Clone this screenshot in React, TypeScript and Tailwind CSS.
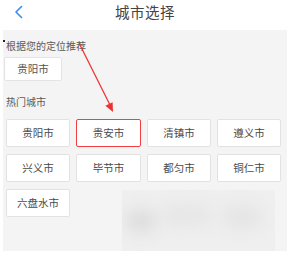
import React from "react";

const hot = ["贵阳市", "贵安市", "清镇市", "遵义市", "兴义市", "毕节市", "都匀市", "铜仁市", "六盘水市"];

export default function App() {
  return (
    <div
      className="relative w-[287px] h-[253px] bg-white overflow-hidden"
      style={{ fontFamily: '"Noto Sans CJK SC", "Noto Sans", sans-serif' }}
    >
      <div className="relative h-[30px] flex items-center justify-center">
        <svg className="absolute left-[13px] top-[5px]" width="12" height="14" viewBox="0 0 12 14">
          <path d="M8.5 1.5 L3 7 L8.5 12.5" fill="none" stroke="#3b8cf0" strokeWidth="1.6" strokeLinecap="round" strokeLinejoin="round" />
        </svg>
        <span className="text-[14.5px] leading-none text-[#444] -mt-[6px] ml-[3px] tracking-[0.5px]">城市选择</span>
      </div>
      <div className="ml-[3px] h-[221px] bg-[#f4f4f4] pt-[9px]">
        <div className="relative pl-[3px] text-[10px] leading-[13px] text-[#5a5a5a]">
          <span className="absolute left-[0px] top-[1px] w-[2px] h-[2px] bg-[#222]" />
          根据您的定位推荐
        </div>
        <div className="mt-[5px] pl-[1px]">
          <div className="w-[58px] h-[24px] bg-white border border-[#e4e4e4] rounded-[2px] flex items-center justify-center text-[10.5px] text-[#555]">
            贵阳市
          </div>
        </div>
        <div className="mt-[15px] pl-[3px] text-[10px] leading-[12px] text-[#5a5a5a]">热门城市</div>
        <div className="mt-[11px] pl-[3px] grid grid-cols-[64px_65px_64px_64px] gap-x-[6px] gap-y-[7px]">
          {hot.map((c, i) => (
            <div
              key={c}
              className={
                "h-[28px] bg-white rounded-[2px] flex items-center justify-center text-[10.5px] text-[#4a4a4a] " +
                (i === 1 ? "border border-[#f04040]" : "border border-[#e2e2e2]")
              }
            >
              {c}
            </div>
          ))}
        </div>
      </div>
      <div className="absolute left-[122px] top-[190px] w-[153px] h-[61px] bg-[#efefef] overflow-hidden">
        <div className="absolute inset-0 blur-[8px]">
          <div className="absolute left-[4px] top-[20px] w-[30px] h-[22px] rounded-full bg-[#dcdcdc]" />
          <div className="absolute left-[40px] top-[14px] w-[50px] h-[22px] rounded-full bg-[#e6e6e6]" />
          <div className="absolute left-[100px] top-[16px] w-[40px] h-[22px] rounded-full bg-[#e4e4e4]" />
        </div>
      </div>
      <svg className="absolute left-0 top-0 pointer-events-none" width="287" height="253" viewBox="0 0 287 253">
        <line x1="79" y1="43" x2="110" y2="105" stroke="#f03030" strokeWidth="1.2" />
        <polygon points="113,112 105.4,105.7 112.6,102.2" fill="#f03030" />
      </svg>
    </div>
  );
}
